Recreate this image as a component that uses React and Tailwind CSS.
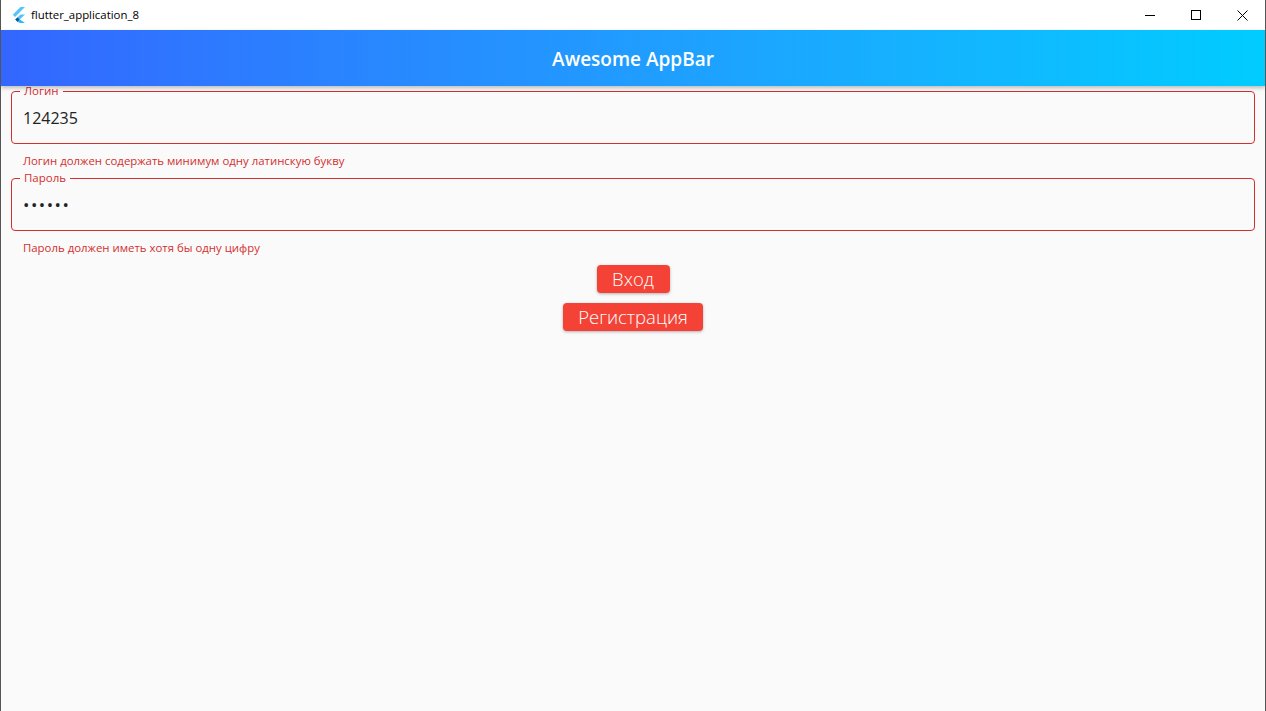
import React from 'react';

function FlutterLogo() {
  return (
    <svg width="14" height="16" viewBox="0 0 14 16">
      <polygon points="8.5,0 13,0 3,10 0.8,7.8" fill="#54c5f8" />
      <polygon points="8.5,7.4 13,7.4 7.8,12.6 5.5,10.3" fill="#54c5f8" />
      <polygon points="5.5,10.3 7.8,12.6 7.8,12.6 5.5,14.9 3.2,12.6" fill="#01579b" />
      <polygon points="7.8,12.6 13,16 8.5,16 5.5,14.9" fill="#29b6f6" />
    </svg>
  );
}

function Field({ label, value, error, password }) {
  return (
    <div className="flex flex-col">
      <div className="relative h-[53px] rounded-[4px] border border-[#d32f2f]">
        <span className="absolute -top-[9px] left-[8px] bg-[#fafafa] px-[4px] text-[11.5px] leading-[16px] text-[#d32f2f]">
          {label}
        </span>
        <div
          className={`flex h-full items-center px-[11px] text-[16px] text-[#222] ${password ? 'tracking-[1.5px] text-[17px]' : ''}`}
        >
          {value}
        </div>
      </div>
      <div className="h-[34px] px-[12px] pt-[9px] text-[11.4px] leading-[16px] text-[#d32f2f]">{error}</div>
    </div>
  );
}

export default function App() {
  return (
    <div
      className="flex h-[711px] w-[1266px] flex-col overflow-hidden border-x border-[#555] bg-[#fafafa]"
      style={{ fontFamily: '"Open Sans", "Noto Sans", sans-serif' }}
    >
      {/* Window title bar */}
      <div className="flex h-[30px] items-center bg-white">
        <div className="flex items-center gap-[5px] pl-[11px]">
          <FlutterLogo />
          <span className="text-[11.4px] text-black">flutter_application_8</span>
        </div>
        <div className="ml-auto flex h-full">
          <div className="flex w-[46px] items-center justify-center">
            <div className="h-px w-[10px] bg-black" />
          </div>
          <div className="flex w-[46px] items-center justify-center">
            <div className="h-[10px] w-[10px] border border-black" />
          </div>
          <div className="flex w-[46px] items-center justify-center">
            <svg width="11" height="11" viewBox="0 0 11 11">
              <path d="M0.5 0.5 L10.5 10.5 M10.5 0.5 L0.5 10.5" stroke="#000" strokeWidth="1" />
            </svg>
          </div>
        </div>
      </div>

      {/* App bar */}
      <div className="relative z-10 flex h-[56px] items-center justify-center bg-gradient-to-r from-[#3366ff] to-[#00ccff] shadow-[0_2px_4px_rgba(0,0,0,0.25)]">
        <span className="pt-[2px] text-[19px] font-semibold text-white">Awesome AppBar</span>
      </div>

      {/* Form */}
      <div className="flex flex-col px-[10px] pt-[5px]">
        <Field label="Логин" value="124235" error="Логин должен содержать минимум одну латинскую букву" />
        <Field label="Пароль" value="••••••" error="Пароль должен иметь хотя бы одну цифру" password />
        <div className="flex flex-col items-center gap-[10px]">
          <button className="h-[28px] w-[73px] rounded-[4px] bg-[#f44336] text-[18.5px] font-light leading-[28px] text-white shadow-[0_1px_3px_rgba(0,0,0,0.3)]">
            Вход
          </button>
          <button className="h-[28px] w-[140px] rounded-[4px] bg-[#f44336] text-[18.5px] font-light leading-[28px] text-white shadow-[0_1px_3px_rgba(0,0,0,0.3)]">
            Регистрация
          </button>
        </div>
      </div>
    </div>
  );
}
